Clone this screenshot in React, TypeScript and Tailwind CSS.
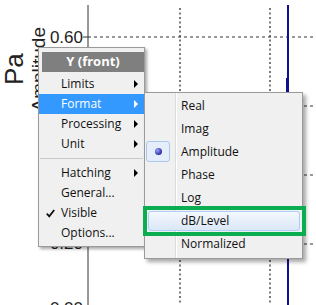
import React from 'react';

const font = { fontFamily: '"Open Sans", "Noto Sans", sans-serif' };

function MainItem({ label, arrow, active, checked }: { label: string; arrow?: boolean; active?: boolean; checked?: boolean }) {
  return (
    <div className={`flex items-center h-[20px] pr-[6px] ${active ? 'bg-[#3399ff] text-white' : 'text-[#111]'}`}>
      <span className="w-[22px] flex justify-center">
        {checked && (
          <svg width="9" height="9" viewBox="0 0 9 9">
            <path d="M0.8 4.6 L3.3 7.4 L8.2 1" fill="none" stroke="#111" strokeWidth="1.8" />
          </svg>
        )}
      </span>
      <span>{label}</span>
      {arrow && (
        <span className={`ml-auto w-0 h-0 border-y-[4px] border-y-transparent border-l-[4px] ${active ? 'border-l-white' : 'border-l-black'}`} />
      )}
    </div>
  );
}

function SubItem({ label, radio, hover }: { label: string; radio?: boolean; hover?: boolean }) {
  if (hover) {
    return (
      <div className="h-[23px] pt-[2px] pb-[1px] pl-[3px] pr-[2px] relative">
        <div className="h-full flex items-center rounded-[3px] border border-[#aecff7] bg-gradient-to-b from-[#f3f8fd] to-[#dbe7f6] pl-[32px] text-[#111]">
          {label}
        </div>
      </div>
    );
  }
  return (
    <div className="flex items-center h-[23px] relative text-[#111]">
      <span className="w-[30px] h-full flex items-center">
        {radio && (
          <span className="ml-[1px] w-[24px] h-[21px] rounded-[3px] border border-[#a8c8ec] bg-[#e5eefa] flex items-center justify-center">
            <span className="w-[7px] h-[7px] rounded-full bg-[radial-gradient(circle_at_35%_35%,#9aa3ff,#2a2f9a_70%)]" />
          </span>
        )}
      </span>
      <span className="pl-[6px]">{label}</span>
    </div>
  );
}

export default function App() {
  return (
    <div className="relative w-[316px] h-[305px] overflow-hidden bg-white" style={font}>
      <svg className="absolute inset-0" width="316" height="305" viewBox="0 0 316 305">
        {/* grid */}
        {[37, 106, 175, 244].map((y) => (
          <g key={y}>
            <line x1="88" y1={y} x2="316" y2={y} stroke="#333" strokeWidth="1" strokeDasharray="3 3" />
            <line x1="83" y1={y} x2="88" y2={y} stroke="#333" strokeWidth="1" />
          </g>
        ))}
        <line x1="180" y1="8" x2="180" y2="305" stroke="#333" strokeWidth="1.3" strokeDasharray="2 2.5" />
        <line x1="270" y1="8" x2="270" y2="305" stroke="#333" strokeWidth="1.3" strokeDasharray="2 2.5" />
        <line x1="88" y1="5" x2="88" y2="305" stroke="#333" strokeWidth="1" />
        <line x1="288" y1="5" x2="288" y2="305" stroke="#10108f" strokeWidth="2" />
        <rect x="286" y="78" width="3" height="14" fill="#10108f" />
        <g style={{ fontFamily: '"Liberation Sans", Arial, sans-serif' }} fill="#222">
          <text x="83" y="43" fontSize="17" textAnchor="end">0.60</text>
          <text x="83" y="249" fontSize="17" textAnchor="end">0.20</text>
          <text x="83" y="314" fontSize="17" textAnchor="end">0.00</text>
          <text transform="translate(23,85) rotate(-90)" fontSize="26">Pa</text>
          <text transform="translate(45,27) rotate(-90)" fontSize="19" textAnchor="end">Amplitude</text>
        </g>
      </svg>

      {/* context menu */}
      <div className="absolute left-[38px] top-[47px] w-[107px] h-[200px] border border-[#9a9a9a] bg-[#f0f0f0] shadow-[2px_2px_3px_rgba(0,0,0,0.35)] pt-[4px] text-[12px]">
        <div className="ml-[3px] h-[20px] bg-[#7f7f7f] text-white font-bold text-[13px] flex items-center justify-center">
          Y (front)
        </div>
        <div className="mt-[2px]">
          <MainItem label="Limits" arrow />
          <MainItem label="Format" arrow active />
          <MainItem label="Processing" arrow />
          <MainItem label="Unit" arrow />
        </div>
        <div className="mt-[4px] mb-[4px] mx-[1px] border-t border-[#c8c8c8]" />
        <div>
          <MainItem label="Hatching" arrow />
          <MainItem label="General..." />
          <MainItem label="Visible" checked />
          <MainItem label="Options..." />
        </div>
      </div>

      {/* submenu */}
      <div className="absolute left-[144px] top-[92px] w-[159px] h-[167px] border border-[#9a9a9a] bg-[#f0f0f0] shadow-[3px_3px_4px_rgba(0,0,0,0.35)] pt-[1px] text-[12px]">
        <div className="absolute left-[30px] top-0 bottom-0 w-[2px] border-l border-[#dcdcdc] border-r border-r-white" />
        <SubItem label="Real" />
        <SubItem label="Imag" />
        <SubItem label="Amplitude" radio />
        <SubItem label="Phase" />
        <SubItem label="Log" />
        <SubItem label="dB/Level" hover />
        <SubItem label="Normalized" />
      </div>

      {/* highlight frame */}
      <div className="absolute left-[143px] top-[206px] w-[163px] h-[30px] border-[4px] border-[#0aad4f]" />
    </div>
  );
}
